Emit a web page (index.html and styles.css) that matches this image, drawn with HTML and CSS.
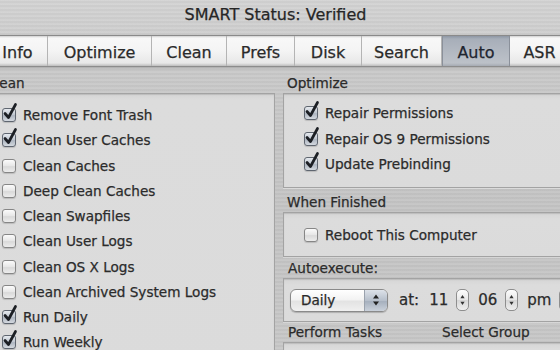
FILE: index.html
```html
<!DOCTYPE html>
<html>
<head>
<meta charset="utf-8">
<link rel="stylesheet" href="styles.css">
</head>
<body>
<div class="window">
  <div class="title">SMART Status: Verified</div>
  <div class="tabs">
    <div class="tab t-info">Info</div>
    <div class="tab t-opt">Optimize</div>
    <div class="tab t-clean">Clean</div>
    <div class="tab t-prefs">Prefs</div>
    <div class="tab t-disk">Disk</div>
    <div class="tab t-search">Search</div>
    <div class="tab t-auto selected">Auto</div>
    <div class="tab t-asr">ASR</div>
  </div>
  <div class="content">
    <div class="col-left">
      <div class="group-label">Clean</div>
      <div class="box box-clean">
        <div class="row"><span class="cb checked"><svg class="mark" viewBox="0 0 16 18"><path d="M3 10.5 L6.5 14.5 L13.5 1.5"/></svg></span><span class="lbl">Remove Font Trash</span></div>
        <div class="row"><span class="cb checked"><svg class="mark" viewBox="0 0 16 18"><path d="M3 10.5 L6.5 14.5 L13.5 1.5"/></svg></span><span class="lbl">Clean User Caches</span></div>
        <div class="row"><span class="cb"></span><span class="lbl">Clean Caches</span></div>
        <div class="row"><span class="cb"></span><span class="lbl">Deep Clean Caches</span></div>
        <div class="row"><span class="cb"></span><span class="lbl">Clean Swapfiles</span></div>
        <div class="row"><span class="cb"></span><span class="lbl">Clean User Logs</span></div>
        <div class="row"><span class="cb"></span><span class="lbl">Clean OS X Logs</span></div>
        <div class="row"><span class="cb"></span><span class="lbl">Clean Archived System Logs</span></div>
        <div class="row"><span class="cb checked"><svg class="mark" viewBox="0 0 16 18"><path d="M3 10.5 L6.5 14.5 L13.5 1.5"/></svg></span><span class="lbl">Run Daily</span></div>
        <div class="row"><span class="cb checked"><svg class="mark" viewBox="0 0 16 18"><path d="M3 10.5 L6.5 14.5 L13.5 1.5"/></svg></span><span class="lbl">Run Weekly</span></div>
      </div>
    </div>
    <div class="col-right">
      <div class="group-label">Optimize</div>
      <div class="box box-opt">
        <div class="row"><span class="cb checked"><svg class="mark" viewBox="0 0 16 18"><path d="M3 10.5 L6.5 14.5 L13.5 1.5"/></svg></span><span class="lbl">Repair Permissions</span></div>
        <div class="row"><span class="cb checked"><svg class="mark" viewBox="0 0 16 18"><path d="M3 10.5 L6.5 14.5 L13.5 1.5"/></svg></span><span class="lbl">Repair OS 9 Permissions</span></div>
        <div class="row"><span class="cb checked"><svg class="mark" viewBox="0 0 16 18"><path d="M3 10.5 L6.5 14.5 L13.5 1.5"/></svg></span><span class="lbl">Update Prebinding</span></div>
      </div>
      <div class="group-label gl-finish">When Finished</div>
      <div class="box box-finish">
        <div class="row"><span class="cb"></span><span class="lbl">Reboot This Computer</span></div>
      </div>
      <div class="group-label gl-auto">Autoexecute:</div>
      <div class="box box-auto">
        <div class="popup">
          <span class="popup-text">Daily</span>
          <span class="popup-arrows"><svg viewBox="0 0 10 16" class="arr"><path d="M2 6.5 L5 2.5 L8 6.5 Z M2 9.5 L5 13.5 L8 9.5 Z"/></svg></span>
        </div>
        <span class="ctl-text at">at:</span>
        <span class="ctl-text num n1">11</span>
        <span class="stepper"><svg viewBox="0 0 13 21" class="step-arr"><path d="M4 8.5 L6.5 4.5 L9 8.5 Z M4 12.5 L6.5 16.5 L9 12.5 Z"/></svg></span>
        <span class="ctl-text num">06</span>
        <span class="stepper"><svg viewBox="0 0 13 21" class="step-arr"><path d="M4 8.5 L6.5 4.5 L9 8.5 Z M4 12.5 L6.5 16.5 L9 12.5 Z"/></svg></span>
        <span class="ctl-text num">pm</span>
        <span class="stepper"><svg viewBox="0 0 13 21" class="step-arr"><path d="M4 8.5 L6.5 4.5 L9 8.5 Z M4 12.5 L6.5 16.5 L9 12.5 Z"/></svg></span>
      </div>
      <div class="group-label gl-tasks"><span class="tasks-a">Perform Tasks</span><span>Select Group</span></div>
      <div class="box box-tasks"></div>
    </div>
  </div>
</div>
</body>
</html>
```

FILE: styles.css
```css
html, body {
  margin: 0;
  padding: 0;
}
body {
  width: 560px;
  height: 350px;
  overflow: hidden;
  font-family: "DejaVu Sans", "Liberation Sans", sans-serif;
  color: #2b2b2b;
  background: #c6c6c6;
  -webkit-text-stroke: 0.25px currentColor;
}
.window {
  width: 560px;
  height: 350px;
  overflow: hidden;
  background:
    repeating-linear-gradient(180deg, rgba(255,255,255,0.06) 0 1px, rgba(0,0,0,0.025) 1px 3px, rgba(255,255,255,0.03) 3px 4px),
    linear-gradient(180deg, #d3d3d3 0%, #c9c9c9 20%, #c4c4c4 60%, #c7c7c7 100%);
}
.title {
  height: 35px;
  box-sizing: border-box;
  padding-bottom: 7px;
  padding-right: 9px;
  display: flex;
  align-items: center;
  justify-content: center;
  font-size: 16px;
  color: #262626;
}
.tabs {
  display: flex;
  height: 32px;
  box-sizing: border-box;
  margin-left: -12px;
  width: 600px;
  border-top: 1px solid #8a8a8a;
  border-bottom: 1px solid #8c8c8c;
  background: linear-gradient(180deg, #d0d0d0 0px, #f8f8f8 2px, #f4f4f4 50%, #e8e8e8 90%, #bdbdbd 100%);
  box-shadow: 0 1px 2px rgba(0,0,0,0.18);
}
.tab {
  box-sizing: border-box;
  height: 100%;
  display: flex;
  align-items: center;
  justify-content: center;
  padding-top: 3px;
  font-size: 16px;
  color: #2a2a2a;
  border-right: 1px solid #b4b4b4;
}
.t-info { width: 60px; }
.t-opt { width: 104px; }
.t-clean { width: 75px; }
.t-prefs { width: 68px; }
.t-disk { width: 67px; }
.t-search { width: 80px; }
.t-auto { width: 68px; }
.t-asr { width: 60px; }
.tab.selected {
  background: linear-gradient(180deg, #8e97a4 0px, #a7aeb9 3px, #b2b8c1 50%, #bcc1c8 90%, #a5aab2 100%);
  color: #1f2530;
  border-right-color: #8a909a;
  border-left: 1px solid #8a909a;
}
.content {
  display: flex;
  gap: 8px;
  margin-left: -18px;
  padding-top: 6px;
}
.col-left {
  width: 293px;
  flex: none;
}
.col-right {
  width: 300px;
  flex: none;
}
.group-label {
  height: 20px;
  line-height: 20px;
  font-size: 13.6px;
  padding-left: 4px;
  color: #2b2b2b;
}
.gl-finish { margin-top: 4px; }
.gl-auto { margin-top: 1px; padding-left: 5px; }
.gl-tasks { display: flex; padding-left: 5px; }
.tasks-a { width: 154px; }
.box {
  box-sizing: border-box;
  background: linear-gradient(180deg, #d5d5d5 0px, #dcdcdc 6px, #dbdbdb 100%);
  border: 1px solid #a3a3a3;
  box-shadow: inset 0 1px 1px rgba(0,0,0,0.12), 0 1px 0 rgba(255,255,255,0.35);
}
.box-clean {
  height: 290px;
  padding-top: 8.5px;
  padding-left: 19px;
}
.box-clean .row { height: 25.25px; }
.box-opt {
  height: 95px;
  padding-top: 6.5px;
  padding-left: 20px;
}
.box-opt .row { height: 25.5px; }
.box-finish {
  height: 45px;
  padding-left: 20px;
  display: flex;
  align-items: center;
}
.box-auto {
  height: 44px;
  padding-left: 6px;
  display: flex;
  align-items: center;
}
.box-tasks {
  height: 40px;
}
.row {
  display: flex;
  align-items: center;
}
.lbl {
  font-size: 13.6px;
  margin-left: 7px;
  color: #2b2b2b;
}
.cb {
  position: relative;
  flex: none;
  width: 14px;
  height: 14px;
  box-sizing: border-box;
  border: 1px solid #868686;
  border-radius: 3px;
  background: linear-gradient(180deg, #fbfbfb 0%, #e6e6e6 50%, #d9d9d9 55%, #ececec 100%);
  box-shadow: 0 1px 1px rgba(0,0,0,0.15);
}
.cb.checked {
  border-color: #5f6670;
  background: linear-gradient(180deg, #e6eaef 0%, #bfc6cf 50%, #aeb6c1 55%, #d4d9df 100%);
}
.mark {
  position: absolute;
  left: -1px;
  top: -6px;
  width: 16px;
  height: 18px;
  overflow: visible;
}
.mark path {
  fill: none;
  stroke: #1c1f24;
  stroke-width: 2.7;
  stroke-linecap: round;
  stroke-linejoin: round;
}
.popup {
  flex: none;
  width: 98px;
  height: 23px;
  box-sizing: border-box;
  border: 1px solid #8a8a8a;
  border-radius: 6px;
  display: flex;
  overflow: hidden;
  background: linear-gradient(180deg, #ffffff 0%, #f3f3f3 45%, #e3e3e3 55%, #f0f0f0 100%);
  box-shadow: 0 1px 1px rgba(0,0,0,0.2);
}
.popup-text {
  flex: 1;
  font-size: 13.6px;
  line-height: 21px;
  padding-left: 10px;
  color: #2a2a2a;
}
.popup-arrows {
  width: 22px;
  display: flex;
  align-items: center;
  justify-content: center;
  border-left: 1px solid #9aa2ad;
  background: linear-gradient(180deg, #dde2e9 0%, #b6bfcb 50%, #a6b0be 55%, #cad1db 100%);
}
.arr {
  width: 10px;
  height: 16px;
}
.arr path { fill: #222; }
.ctl-text {
  font-size: 15px;
  color: #2b2b2b;
}
.at { margin-left: 11px; }
.num { margin-left: 9px; }
.n1 { margin-left: 10px; }
.stepper {
  flex: none;
  margin-left: 8px;
  width: 13px;
  height: 22px;
  box-sizing: border-box;
  border: 1px solid #8e8e8e;
  border-radius: 5px;
  background: linear-gradient(180deg, #fdfdfd 0%, #e8e8e8 48%, #d6d6d6 52%, #eeeeee 100%);
  display: flex;
  align-items: center;
}
.step-arr {
  width: 11px;
  height: 20px;
}
.step-arr path { fill: #333; }
```
